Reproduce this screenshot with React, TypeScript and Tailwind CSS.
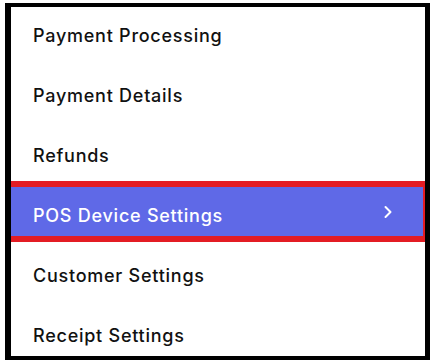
import { ChevronRight } from 'lucide-react';

const items = [
  'Payment Processing',
  'Payment Details',
  'Refunds',
  'POS Device Settings',
  'Customer Settings',
  'Receipt Settings',
];

const ACTIVE = 'POS Device Settings';

const SettingsMenu = () => {
  return (
    <div className="relative ml-[5px] mt-[3px] w-[425px] bg-white">
      <ul className="flex flex-col gap-[11px] pl-[6px] pr-[7px] pt-[4px] pb-[4px]">
        {items.map((label) => {
          const active = label === ACTIVE;
          return (
            <li
              key={label}
              className={
                active
                  ? 'flex h-[49px] items-center justify-between pl-[22px] pr-[25px] bg-[#5f69e7] text-white outline-[6px] outline-solid outline-[#e31c24]'
                  : 'flex h-[49px] items-center justify-between pl-[22px] pr-[25px] text-[#111111]'
              }
            >
              <span className="text-[18px] font-medium leading-none tracking-[0.75px] pt-[9px]">{label}</span>
              {active && <ChevronRight size={20} strokeWidth={2.4} />}
            </li>
          );
        })}
      </ul>
      <div className="pointer-events-none absolute inset-0 border-black border-l-[6px] border-t-[4px] border-r-[5px] border-b-[4px]" />
    </div>
  );
}

export default function App() {
  return (
    <div className="h-[363px] w-[430px] bg-white" style={{ fontFamily: 'Inter, sans-serif' }}>
      <SettingsMenu />
    </div>
  );
}
